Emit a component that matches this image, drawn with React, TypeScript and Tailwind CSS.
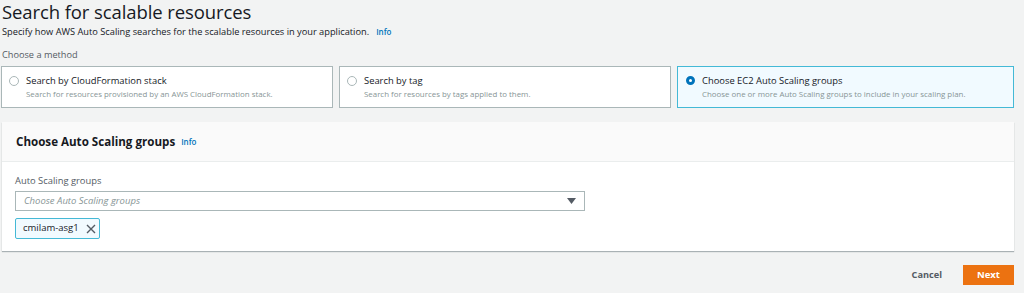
import React from "react";

const font = { fontFamily: '"Open Sans", "Liberation Sans", Arial, sans-serif' };

function Radio({ checked }: { checked?: boolean }) {
  return checked ? (
    <span className="inline-block w-[9px] h-[9px] rounded-full border-[3px] border-[#0073bb] bg-white shrink-0" />
  ) : (
    <span className="inline-block w-[10px] h-[10px] rounded-full border border-[#aab7b8] bg-white shrink-0" />
  );
}

function Card({ title, desc, checked, w }: { title: string; desc: string; checked?: boolean; w: string }) {
  return (
    <div
      className={`${w} h-[42px] border ${checked ? "border-[#44b9d6] bg-[#f1faff]" : "border-[#aab7b8] bg-white"} flex items-start pl-[7px] pt-[7px]`}
    >
      <div className="mt-[2px] w-[10px] flex justify-center">
        <Radio checked={checked} />
      </div>
      <div className="ml-[7px]">
        <div className="text-[9.4px] leading-[14px] text-[#16191f]">{title}</div>
        <div className="text-[7.9px] leading-[13px] text-[#879596]">{desc}</div>
      </div>
    </div>
  );
}

export default function App() {
  return (
    <div className="w-[1024px] h-[293px] bg-[#f2f3f3] overflow-hidden pl-[1px] pr-[10px]" style={font}>
      <h1 className="text-[18.5px] leading-[24px] text-[#16191f] pl-[1px] tracking-[-0.1px]">Search for scalable resources</h1>
      <div className="flex items-center pl-[1px] mt-[1px] h-[14px]">
        <span className="text-[9.25px] text-[#16191f]">Specify how AWS Auto Scaling searches for the scalable resources in your application.</span>
        <span className="ml-[7px] text-[8px] font-semibold text-[#0073bb]">Info</span>
      </div>
      <div className="mt-[10px] pl-[1px] text-[9.2px] leading-[12px] text-[#545b64]">Choose a method</div>
      <div className="flex gap-[6px] mt-[5px]">
        <Card w="w-[332px]" title="Search by CloudFormation stack" desc="Search for resources provisioned by an AWS CloudFormation stack." />
        <Card w="w-[332px]" title="Search by tag" desc="Search for resources by tags applied to them." />
        <Card w="flex-1" checked title="Choose EC2 Auto Scaling groups" desc="Choose one or more Auto Scaling groups to include in your scaling plan." />
      </div>
      <div className="mt-[14px] ml-[1px] bg-white shadow-[0_1px_1px_0_rgba(0,28,36,0.3)]">
        <div className="h-[40px] bg-[#fafafa] border-b border-[#eaeded] flex items-center pl-[14px]">
          <span className="text-[11.6px] font-bold text-[#16191f]">Choose Auto Scaling groups</span>
          <span className="ml-[6px] text-[8px] font-semibold text-[#0073bb]">Info</span>
        </div>
        <div className="pl-[13px] pt-[12px] pb-[12px]">
          <div className="text-[9.4px] leading-[14px] text-[#545b64]">Auto Scaling groups</div>
          <div className="mt-[3px] w-[570px] h-[20px] border border-[#aab7b8] bg-white flex items-center justify-between pl-[8px] pr-[8px]">
            <span className="text-[9.5px] italic text-[#879596]">Choose Auto Scaling groups</span>
            <svg width="9" height="6" viewBox="0 0 9 6">
              <path d="M0 0 H9 L4.5 6 Z" fill="#545b64" />
            </svg>
          </div>
          <div className="mt-[7px] inline-flex items-center h-[21px] border border-[#44b9d6] bg-[#f1faff] pl-[7px] pr-[3px] rounded-[2px]">
            <span className="text-[9.5px] text-[#16191f]">cmilam-asg1</span>
            <svg className="ml-[7px]" width="10" height="10" viewBox="0 0 10 10">
              <path d="M1 1 L9 9 M9 1 L1 9" stroke="#545b64" strokeWidth="1.4" />
            </svg>
          </div>
        </div>
      </div>
      <div className="flex justify-end items-center mt-[14px]">
        <span className="text-[9.2px] font-bold text-[#545b64] mr-[21px]">Cancel</span>
        <div className="w-[51px] h-[20px] bg-[#ec7211] flex items-center justify-center">
          <span className="text-[9.5px] font-bold text-white">Next</span>
        </div>
      </div>
    </div>
  );
}
